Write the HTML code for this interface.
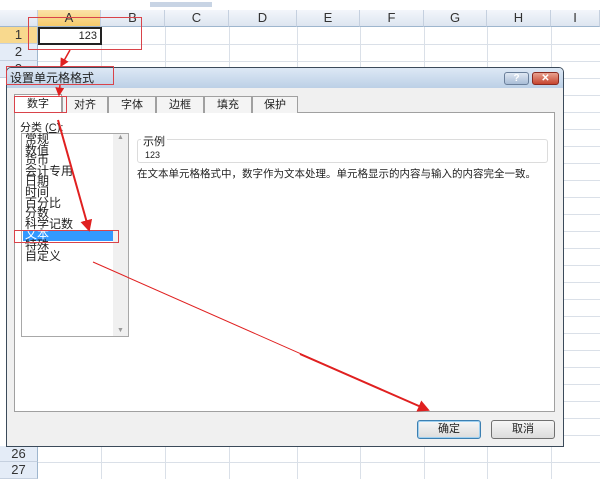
<!DOCTYPE html>
<html><head><meta charset="utf-8"><style>
*{margin:0;padding:0;box-sizing:border-box}
body{width:600px;height:479px;overflow:hidden;background:#fff;position:relative;font-family:"Liberation Sans","Noto Sans CJK SC",sans-serif;font-size:11px;color:#222}
.a{position:absolute}
.hdr{background:linear-gradient(#f3f6fb,#dde5f0);color:#333;text-align:center;font-size:13px;border-right:1px solid #c5d0df;border-bottom:1px solid #9eb6ce}
.rh{background:#e4ecf7;color:#333;text-align:center;font-size:13px;border-bottom:1px solid #c5d0df;border-right:1px solid #9eb6ce}
.vl{position:absolute;width:1px;background:#dae0e8}
.hl{position:absolute;height:1px;background:#dae0e8}
.red{position:absolute;border:1.5px solid #d9434a}
.tab{position:absolute;top:96px;height:17px;border:1px solid #a0a0a0;border-bottom:none;background:#f4f4f4;text-align:center;font-size:11px;line-height:16px}
.btn{position:absolute;top:420px;height:19px;border:1px solid #707070;border-radius:3px;background:linear-gradient(#f6f6f6,#dcdcdc);text-align:center;line-height:17px;font-size:11px}
</style></head><body>
<div class="a" style="left:0;top:0;width:600px;height:10px;background:#fff"></div>
<div class="a" style="left:150px;top:2px;width:62px;height:5px;background:#c8d4e4"></div>
<!-- col headers -->
<div class="a hdr" style="left:0;top:10px;width:38px;height:17px"></div>
<div class="a hdr" style="left:38px;top:10px;width:63px;height:17px;background:linear-gradient(#fbe3a8,#f5c96a)">A</div>
<div class="a hdr" style="left:101px;top:10px;width:64px;height:17px">B</div>
<div class="a hdr" style="left:165px;top:10px;width:64px;height:17px">C</div>
<div class="a hdr" style="left:229px;top:10px;width:68px;height:17px">D</div>
<div class="a hdr" style="left:297px;top:10px;width:63px;height:17px">E</div>
<div class="a hdr" style="left:360px;top:10px;width:64px;height:17px">F</div>
<div class="a hdr" style="left:424px;top:10px;width:63px;height:17px">G</div>
<div class="a hdr" style="left:487px;top:10px;width:64px;height:17px">H</div>
<div class="a hdr" style="left:551px;top:10px;width:49px;height:17px">I</div>
<!-- grid -->
<div class="vl" style="left:101px;top:27px;height:452px"></div>
<div class="vl" style="left:165px;top:27px;height:452px"></div>
<div class="vl" style="left:229px;top:27px;height:452px"></div>
<div class="vl" style="left:297px;top:27px;height:452px"></div>
<div class="vl" style="left:360px;top:27px;height:452px"></div>
<div class="vl" style="left:424px;top:27px;height:452px"></div>
<div class="vl" style="left:487px;top:27px;height:452px"></div>
<div class="vl" style="left:551px;top:27px;height:452px"></div>
<div class="hl" style="left:38px;top:44px;width:562px"></div>
<div class="hl" style="left:38px;top:61px;width:562px"></div>
<div class="hl" style="left:38px;top:78px;width:562px"></div>
<div class="hl" style="left:38px;top:95px;width:562px"></div>
<div class="hl" style="left:38px;top:112px;width:562px"></div>
<div class="hl" style="left:38px;top:129px;width:562px"></div>
<div class="hl" style="left:38px;top:146px;width:562px"></div>
<div class="hl" style="left:38px;top:163px;width:562px"></div>
<div class="hl" style="left:38px;top:180px;width:562px"></div>
<div class="hl" style="left:38px;top:197px;width:562px"></div>
<div class="hl" style="left:38px;top:214px;width:562px"></div>
<div class="hl" style="left:38px;top:231px;width:562px"></div>
<div class="hl" style="left:38px;top:248px;width:562px"></div>
<div class="hl" style="left:38px;top:265px;width:562px"></div>
<div class="hl" style="left:38px;top:282px;width:562px"></div>
<div class="hl" style="left:38px;top:299px;width:562px"></div>
<div class="hl" style="left:38px;top:316px;width:562px"></div>
<div class="hl" style="left:38px;top:333px;width:562px"></div>
<div class="hl" style="left:38px;top:350px;width:562px"></div>
<div class="hl" style="left:38px;top:367px;width:562px"></div>
<div class="hl" style="left:38px;top:384px;width:562px"></div>
<div class="hl" style="left:38px;top:401px;width:562px"></div>
<div class="hl" style="left:38px;top:418px;width:562px"></div>
<div class="hl" style="left:38px;top:435px;width:562px"></div>
<div class="hl" style="left:38px;top:462px;width:562px"></div>
<div class="a rh" style="left:0;top:27px;width:38px;height:17px;background:#f8d98e">1</div>
<div class="a rh" style="left:0;top:44px;width:38px;height:17px">2</div>
<div class="a rh" style="left:0;top:61px;width:38px;height:17px">3</div>
<div class="a rh" style="left:0;top:446px;width:38px;height:16px;line-height:15px">26</div>
<div class="a rh" style="left:0;top:462px;width:38px;height:17px">27</div>
<div class="a" style="left:38px;top:27px;width:64px;height:18px;border:2px solid #222;font-size:11px;text-align:right;padding-right:3px;line-height:14px">123</div>
<!-- dialog -->
<div class="a" style="left:6px;top:67px;width:558px;height:380px;border:1px solid #3b4a5a;border-radius:5px 5px 0 0;background:#f0f0f0"></div>
<div class="a" style="left:7px;top:68px;width:556px;height:20px;background:linear-gradient(#dde8f5,#bcd0e6);border-radius:4px 4px 0 0;font-size:12px;padding-left:3px;line-height:20px">设置单元格格式</div>
<div class="a" style="left:504px;top:72px;width:25px;height:13px;border:1px solid #6a7f9a;border-radius:3px;background:linear-gradient(#dfe8f3,#a9bdd6);color:#fff;font-size:10px;text-align:center;line-height:11px;font-weight:bold">?</div>
<div class="a" style="left:532px;top:72px;width:27px;height:13px;border:1px solid #8a2a20;border-radius:3px;background:linear-gradient(#e8a18f,#c6452f);color:#fff;font-size:10px;text-align:center;line-height:11px;font-weight:bold">✕</div>
<div class="a" style="left:14px;top:112px;width:541px;height:300px;background:#fff;border:1px solid #a0a0a0"></div>
<div class="tab" style="left:14px;width:48px;top:94px;height:19px;background:#fff;line-height:18px">数字</div>
<div class="tab" style="left:62px;width:46px">对齐</div>
<div class="tab" style="left:108px;width:48px">字体</div>
<div class="tab" style="left:156px;width:48px">边框</div>
<div class="tab" style="left:204px;width:48px">填充</div>
<div class="tab" style="left:252px;width:46px">保护</div>
<div class="a" style="left:20px;top:119px;font-size:11px">分类 (<u>C</u>):</div>
<div class="a" style="left:21px;top:133px;width:108px;height:204px;border:1px solid #a8a8a8;background:#fff"></div>
<div class="a" style="left:113px;top:134px;width:15px;height:202px;background:#f0f0f0;color:#999;font-size:7px;text-align:center">▲<div style="position:absolute;bottom:2px;width:15px">▼</div></div>
<div class="a" style="left:23px;top:231px;width:90px;height:10px;background:#3399ff"></div>
<div class="a" style="left:25px;top:134px;font-size:12px;line-height:10.6px">常规<br>数值<br>货币<br>会计专用<br>日期<br>时间<br>百分比<br>分数<br>科学记数<br><span style="color:#fff">文本</span><br>特殊<br>自定义</div>
<div class="a" style="left:137px;top:139px;width:411px;height:24px;border:1px solid #dcdcdc;border-radius:3px"></div>
<div class="a" style="left:141px;top:133px;background:#fff;padding:0 2px;font-size:11px">示例</div>
<div class="a" style="left:145px;top:150px;font-size:9px">123</div>
<div class="a" style="left:137px;top:166px;font-size:10.5px;white-space:nowrap">在文本单元格格式中，数字作为文本处理。单元格显示的内容与输入的内容完全一致。</div>
<div class="btn" style="left:417px;width:64px;border-color:#3c7fb1;box-shadow:0 0 0 1px #9fd0f0 inset">确定</div>
<div class="btn" style="left:491px;width:64px">取消</div>
<!-- annotations -->
<div class="red" style="left:28px;top:17px;width:114px;height:33px"></div>
<div class="red" style="left:6px;top:66px;width:108px;height:19px"></div>
<div class="red" style="left:14px;top:96px;width:53px;height:17px"></div>
<div class="red" style="left:14px;top:230px;width:105px;height:13px"></div>
<svg class="a" style="left:0;top:0" width="600" height="479">
<defs><marker id="m" markerWidth="6" markerHeight="6" refX="5" refY="3" orient="auto"><path d="M0,0L6,3L0,6z" fill="#e02020"/></marker></defs>
<g stroke="#e02020" fill="none">
<line x1="70" y1="50" x2="61" y2="66" stroke-width="1.5" marker-end="url(#m)"/>
<line x1="60" y1="85" x2="59" y2="95" stroke-width="1.5" marker-end="url(#m)"/>
<line x1="58" y1="120" x2="89" y2="230" stroke-width="2" marker-end="url(#m)"/>
<line x1="93" y1="262" x2="428" y2="410" stroke-width="1" />
<line x1="300" y1="354" x2="428" y2="410" stroke-width="2" marker-end="url(#m)"/>
</g></svg>
</body></html>
